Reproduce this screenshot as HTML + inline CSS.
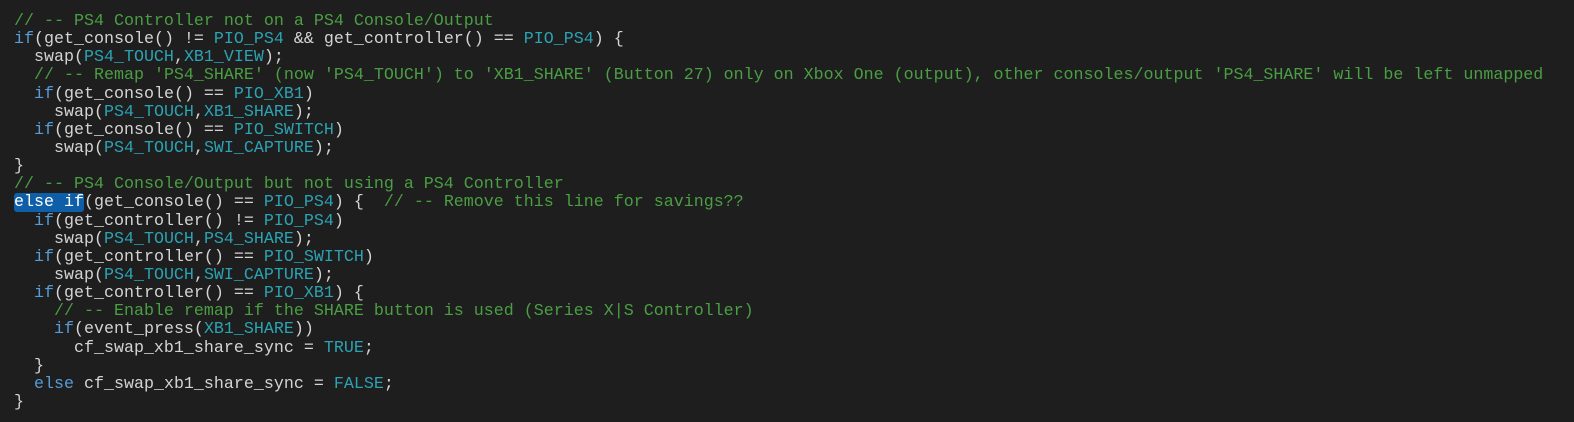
<!DOCTYPE html>
<html><head><meta charset="utf-8"><style>
html,body{margin:0;padding:0;background:#1e1e1e;width:1574px;height:422px;overflow:hidden}
.p{position:absolute;left:14px;top:13px;font-family:"Liberation Mono",monospace;font-size:16.67px;color:#d4d4d4}
.p div{height:18.15px;line-height:18.15px;white-space:pre}
.c{color:#4a9e43}.k{color:#569cd6}.t{color:#2ba3b3}
.s{background:#0e5fa8;color:#fff;border-radius:3px}
</style></head><body><div class="p">
<div><span class="c">// -- PS4 Controller not on a PS4 Console/Output</span></div>
<div><span class="k">if</span>(get_console() != <span class="t">PIO_PS4</span> &amp;&amp; get_controller() == <span class="t">PIO_PS4</span>) {</div>
<div>  swap(<span class="t">PS4_TOUCH</span>,<span class="t">XB1_VIEW</span>);</div>
<div>  <span class="c">// -- Remap 'PS4_SHARE' (now 'PS4_TOUCH') to 'XB1_SHARE' (Button 27) only on Xbox One (output), other consoles/output 'PS4_SHARE' will be left unmapped</span></div>
<div>  <span class="k">if</span>(get_console() == <span class="t">PIO_XB1</span>)</div>
<div>    swap(<span class="t">PS4_TOUCH</span>,<span class="t">XB1_SHARE</span>);</div>
<div>  <span class="k">if</span>(get_console() == <span class="t">PIO_SWITCH</span>)</div>
<div>    swap(<span class="t">PS4_TOUCH</span>,<span class="t">SWI_CAPTURE</span>);</div>
<div>}</div>
<div><span class="c">// -- PS4 Console/Output but not using a PS4 Controller</span></div>
<div><span class="s">else if</span>(get_console() == <span class="t">PIO_PS4</span>) {  <span class="c">// -- Remove this line for savings??</span></div>
<div>  <span class="k">if</span>(get_controller() != <span class="t">PIO_PS4</span>)</div>
<div>    swap(<span class="t">PS4_TOUCH</span>,<span class="t">PS4_SHARE</span>);</div>
<div>  <span class="k">if</span>(get_controller() == <span class="t">PIO_SWITCH</span>)</div>
<div>    swap(<span class="t">PS4_TOUCH</span>,<span class="t">SWI_CAPTURE</span>);</div>
<div>  <span class="k">if</span>(get_controller() == <span class="t">PIO_XB1</span>) {</div>
<div>    <span class="c">// -- Enable remap if the SHARE button is used (Series X|S Controller)</span></div>
<div>    <span class="k">if</span>(event_press(<span class="t">XB1_SHARE</span>))</div>
<div>      cf_swap_xb1_share_sync = <span class="t">TRUE</span>;</div>
<div>  }</div>
<div>  <span class="k">else</span> cf_swap_xb1_share_sync = <span class="t">FALSE</span>;</div>
<div>}</div>
</div></body></html>
